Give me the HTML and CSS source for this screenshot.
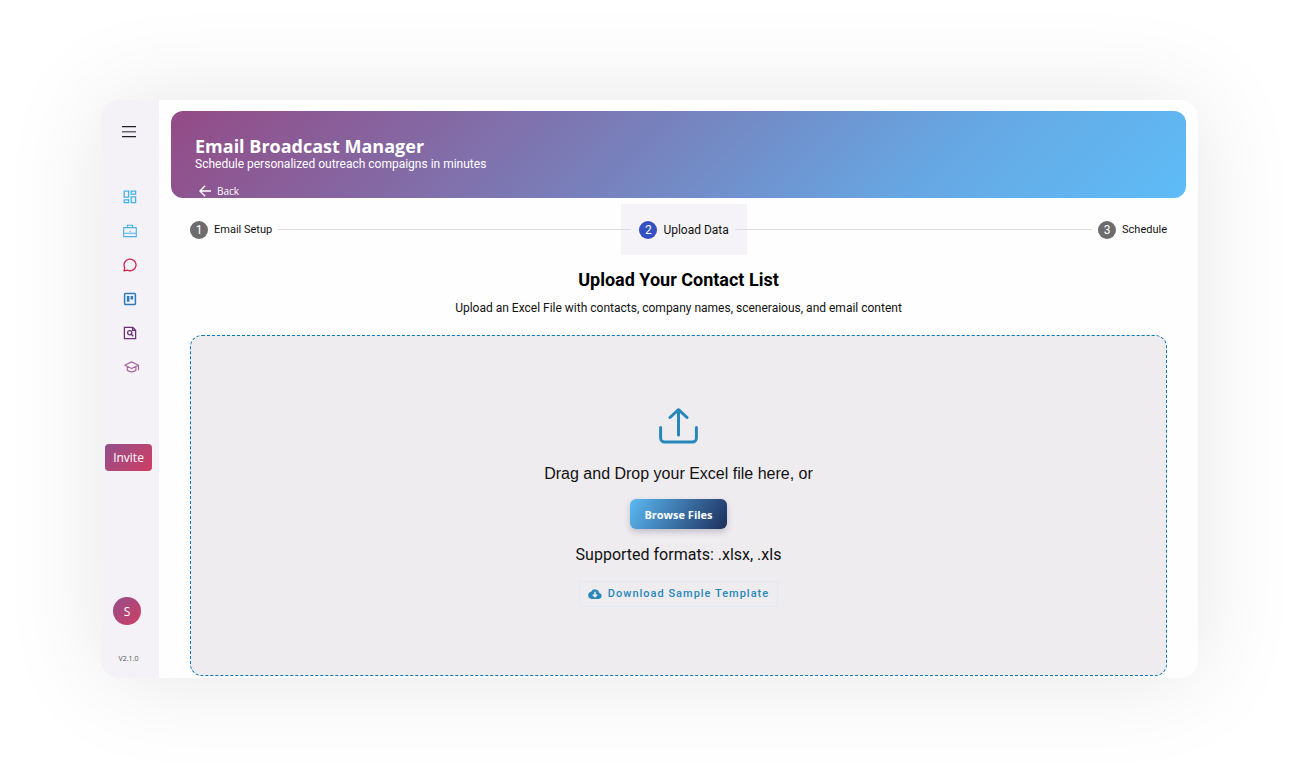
FILE: index.html
```html
<!DOCTYPE html>
<html lang="en">
<head>
    <meta charset="UTF-8">
    <meta name="viewport" content="width=device-width, initial-scale=1.0">
    <title>Email Broadcast Manager</title>
    <link rel="stylesheet" href="styles.css">
</head>
<body>
    <div class="app">
        <aside class="sidebar">
            <button class="icon-button" type="button" aria-label="Menu">
                <svg width="14" height="12" viewBox="0 0 14 12"><path d="M0 0h14v1.300H0zM0 10h14v1.300H0z" fill="#222026"/><path d="M0 5h14v1.500H0z" fill="#6b6970"/></svg>
            </button>
            <nav class="side-nav">
                <a href="#" aria-label="Dashboard">
                    <svg width="14" height="14" viewBox="0 0 14 14" fill="none" stroke="#45b4ea" stroke-width="1.3"><path d="M1.2 1.2h4.4v6H1.2zM8.2 1.2h4.4v3H8.2zM1.2 9.8h4.4v2.8H1.2zM8.2 6.8h4.4v5.8H8.2z"/></svg>
                </a>
                <a href="#" aria-label="Jobs">
                    <svg width="14" height="14" viewBox="0 0 14 14" fill="none" stroke="#45b4ea" stroke-width="1.1"><path d="M.7 3.6h12.6v9H.7zM4.4 3.6V1.2h5.200v2.4M.7 9.300h12.6M7 6.800v1.400"/></svg>
                </a>
                <a href="#" aria-label="Chat">
                    <svg width="14" height="14" viewBox="0 0 14 14" fill="none" stroke="#d02450" stroke-width="1.3" stroke-linejoin="round"><path d="M1 12.8l.7-3.2A6 5.8 0 1 1 4.3 12.1z"/></svg>
                </a>
                <a href="#" aria-label="Board">
                    <svg width="14" height="14" viewBox="0 0 14 14"><rect x="1.6" y="1.6" width="10.8" height="10.8" rx=".8" fill="none" stroke="#2d7bba" stroke-width="1.5"/><path d="M3.9 4h2.5v5.8H3.9zM7.6 4h2.5v3.4H7.6z" fill="#2d7bba"/></svg>
                </a>
                <a href="#" aria-label="Search files">
                    <svg width="14" height="14" viewBox="0 0 14 14" fill="none" stroke="#6f2f79" stroke-width="1.3"><path d="M1.4 1.4h8.4l2.8 2.8v8.4H1.4zM9.6 1.4v3h3"/><circle cx="6.7" cy="6.7" r="2.1"/><path d="M8.2 8.2l2 2"/></svg>
                </a>
                <a class="nav-learn" href="#" aria-label="Learning">
                    <svg width="16" height="12" viewBox="0 0 16 12" fill="none" stroke="#a8669f" stroke-width="1.2" stroke-linejoin="round"><path d="M7.6.9l6.9 3.3-6.9 3.3L.8 4.2zM3.3 5.6v3.6c2.4 2.2 6.2 2.2 8.6 0V5.6M14.5 4.2v5"/></svg>
                </a>
            </nav>
            <button class="invite-button" type="button">Invite</button>
            <div class="side-footer">
                <button class="avatar" type="button">S</button>
                <span class="version">V2.1.0</span>
            </div>
        </aside>

        <main class="content">
            <header class="hero">
                <h1>Email Broadcast Manager</h1>
                <p>Schedule personalized outreach compaigns in minutes</p>
                <a class="back-link" href="#">
                    <svg width="12" height="12" viewBox="0 0 12 12" fill="none" stroke="#fff" stroke-width="1.3"><path d="M12 6H1M6.2.7L.9 6l5.3 5.3"/></svg>
                    Back
                </a>
            </header>

            <section class="panel">
                <ol class="stepper">
                    <li class="step"><span class="step-number">1</span>Email Setup</li>
                    <li class="step-line line-before" aria-hidden="true"></li>
                    <li class="step active" aria-current="step"><span class="step-number">2</span>Upload Data</li>
                    <li class="step-line line-after" aria-hidden="true"></li>
                    <li class="step"><span class="step-number">3</span>Schedule</li>
                </ol>

                <h2>Upload Your Contact List</h2>
                <p class="lead">Upload an Excel File with contacts, company names, sceneraious, and email content</p>

                <div class="dropzone">
                    <svg width="40" height="36" viewBox="0 0 40 36" fill="none" stroke="#2787b9" stroke-width="3" stroke-linecap="round" stroke-linejoin="round"><path d="M19.500 27V2M11 9.500l8.500-7.800L28 9.500M1.600 19.500V30a4 4 0 0 0 4 4h27.800a4 4 0 0 0 4-4V19.500"/></svg>
                    <p class="drop-text">Drag and Drop your Excel file here, or</p>
                    <button class="browse-button" type="button">Browse Files</button>
                    <p class="formats">Supported formats: .xlsx, .xls</p>
                    <a class="template-link" href="#">
                        <svg width="14" height="10" viewBox="0 0 14 10"><path d="M11.3 3.9A4.4 4.4 0 0 0 3.1 2.7 3.7 3.7 0 0 0 3.6 10h7.2a3.1 3.1 0 0 0 .5-6.1z" fill="#2787b9"/><path d="M7 2.7v4.8M4.8 5.5L7 7.7l2.2-2.2" fill="none" stroke="#efecf0" stroke-width="1.5"/></svg>
                        Download Sample Template
                    </a>
                </div>
            </section>
        </main>
    </div>
</body>
</html>
```
FILE: styles.css
```css
:root {
    --blue: #2787b9;
    --side-bg: #f4f2f7;
    --drop-bg: #efecf0;
    --pink-gradient: linear-gradient(135deg, #934f8c, #d03e62);
}

* {
    box-sizing: border-box;
}
body {
    margin: 0;
    padding: 100px 100px 102px 101px;
    min-height: 100vh;
    display: flex;
    background-color: #fff;
    color: #111;
    font-family: Roboto, sans-serif;
    font-size: 12px;
}
h1, h2, p, ol {
    margin: 0;
    padding: 0;
}
button {
    border: none;
    padding: 0;
    cursor: pointer;
    font-family: "Open Sans", sans-serif;
    color: #fff;
}
a {
    text-decoration: none;
}
svg {
    display: block;
    flex-shrink: 0;
}
.app {
    flex: 1;
    display: flex;
    border-radius: 18px;
    background-color: #fefefe;
    box-shadow: 0 0 100px rgba(0, 0, 0, 0.1);
}

/* Sidebar */
.sidebar {
    width: 58px;
    padding: 26px 4px 14px;
    display: flex;
    flex-direction: column;
    align-items: center;
    background-color: var(--side-bg);
    border-radius: 18px 0 0 18px;
}
.icon-button {
    padding: 0 4px;
    height: 12px;
    margin-right: 3px;
    background: none;
}
.side-nav {
    margin-top: 52px;
    margin-right: 1px;
    display: flex;
    flex-direction: column;
    gap: 20px;
}
.side-nav a {
    height: 14px;
    display: flex;
    align-items: center;
}
.nav-learn {
    padding-left: 1px;
    margin-right: -3px;
}
.invite-button {
    width: 47px;
    height: 27px;
    margin-top: 70px;
    margin-right: 3px;
    border-radius: 4px;
    background: var(--pink-gradient);
    font-size: 12px;
}
.side-footer {
    margin-top: auto;
    display: flex;
    flex-direction: column;
    align-items: center;
    gap: 29px;
}
.avatar {
    width: 28px;
    height: 28px;
    margin-right: 6px;
    border-radius: 50%;
    background: var(--pink-gradient);
    font-size: 12px;
}
.version {
    margin-right: 3px;
    color: #555;
    font-family: "Open Sans", sans-serif;
    font-size: 7px;
    line-height: 10px;
}

/* Main area */
.content {
    flex: 1;
    padding: 11px 12px 2px;
    display: flex;
    flex-direction: column;
}
.hero {
    padding: 24px 24px 0;
    height: 87px;
    border-radius: 12px;
    background: linear-gradient(135deg, #934b86, #7880bb 45%, #66a8e4 75%, #5ebcf6);
    color: #fff;
}
.hero h1 {
    font-family: "Open Sans", sans-serif;
    font-size: 18px;
    line-height: 22px;
}
.hero p {
    line-height: 15px;
}
.back-link {
    padding-left: 4px;
    margin-top: 12px;
    display: flex;
    align-items: center;
    gap: 6px;
    color: #fff;
    font-family: "Open Sans", sans-serif;
    font-size: 10px;
    line-height: 14px;
}
.panel {
    flex: 1;
    padding: 6px 19px 0;
    display: flex;
    flex-direction: column;
    align-items: center;
}
.stepper {
    align-self: stretch;
    display: flex;
    align-items: center;
    list-style: none;
    font-size: 11px;
}
.step {
    display: flex;
    align-items: center;
    gap: 6px;
}
.step.active {
    height: 51px;
    padding: 0 18px;
    background-color: #f5f3f7;
    font-size: 12px;
}
.step-number {
    width: 18px;
    height: 18px;
    border-radius: 50%;
    background-color: #6d6b6e;
    color: #fff;
    font-size: 12px;
    line-height: 18px;
    text-align: center;
}
.step.active .step-number {
    background-color: #3550c0;
}
.step-line {
    position: relative;
    flex: 1;
    height: 1px;
    background-color: #dddde0;
}
.line-before {
    margin: 0 -10px 0 6px;
}
.line-after {
    flex-basis: 4px;
    margin: 0 6px 0 -12px;
}
h2 {
    margin-top: 13px;
    color: #000;
    font-size: 18px;
    line-height: 23px;
}
.lead {
    margin-top: 9px;
    line-height: 16px;
}
.dropzone {
    flex: 1;
    align-self: stretch;
    margin-top: 19px;
    padding: 72px 20px 0;
    display: flex;
    flex-direction: column;
    align-items: center;
    border: 1px dashed #0878b4;
    border-radius: 12px;
    background-color: var(--drop-bg);
}
.drop-text, .formats {
    font-size: 16px;
    line-height: 20px;
}
.drop-text {
    margin-top: 20px;
    font-family: "Liberation Sans", Arial, sans-serif;
}
.browse-button {
    width: 97px;
    height: 30px;
    margin-top: 15px;
    border-radius: 6px;
    background: linear-gradient(120deg, #5bb9f3, #1c2f5c);
    box-shadow: 0 3px 6px rgba(60, 50, 90, 0.25);
    font-size: 11px;
    font-weight: 700;
}
.formats {
    margin-top: 16px;
}
.template-link {
    margin-top: 16px;
    padding: 0 8px;
    display: flex;
    align-items: center;
    gap: 6px;
    border: 1px solid #e2e9f1;
    color: var(--blue);
    font-size: 11px;
    font-weight: 500;
    line-height: 24px;
    letter-spacing: 1px;
}
```
